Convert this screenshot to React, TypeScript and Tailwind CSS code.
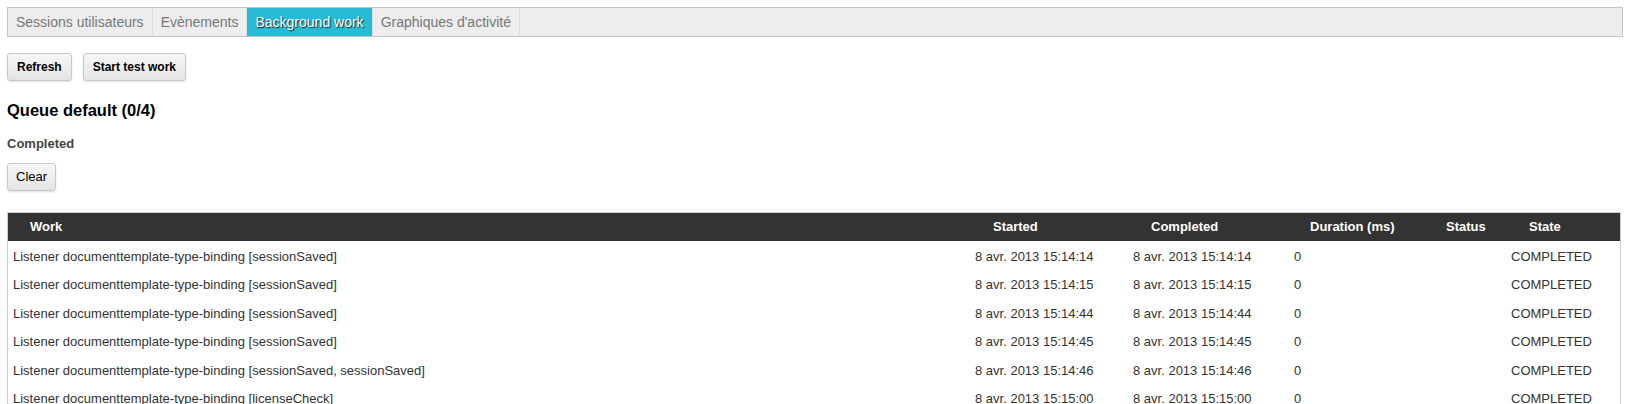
import React from 'react';

const tabs = ['Sessions utilisateurs', 'Evènements', 'Background work', "Graphiques d'activité"];

const rows = [
  { work: 'Listener documenttemplate-type-binding [sessionSaved]', time: '8 avr. 2013 15:14:14' },
  { work: 'Listener documenttemplate-type-binding [sessionSaved]', time: '8 avr. 2013 15:14:15' },
  { work: 'Listener documenttemplate-type-binding [sessionSaved]', time: '8 avr. 2013 15:14:44' },
  { work: 'Listener documenttemplate-type-binding [sessionSaved]', time: '8 avr. 2013 15:14:45' },
  { work: 'Listener documenttemplate-type-binding [sessionSaved, sessionSaved]', time: '8 avr. 2013 15:14:46' },
  { work: 'Listener documenttemplate-type-binding [licenseCheck]', time: '8 avr. 2013 15:15:00' },
];

function Button({ children, bold = true }: { children: React.ReactNode; bold?: boolean }) {
  return (
    <button
      className={
        'h-[28px] rounded-[3px] border border-[#c8c8c8] bg-gradient-to-b from-[#f6f6f6] to-[#e4e4e4] text-black shadow-[0_1px_2px_rgba(0,0,0,0.12)] ' +
        (bold ? 'px-[9px] text-[12px] font-bold' : 'px-2 text-[13px] font-normal')
      }
    >
      {children}
    </button>
  );
}

const cols = 'grid grid-cols-[955px_158px_161px_152px_65px_1fr] items-center';

export default function App() {
  return (
    <div className="min-h-screen bg-white px-[7px] pt-[7px] font-['Liberation_Sans',Arial,sans-serif] text-[#333]">
      <div className="flex h-[30px] w-[1616px] border border-[#c6c6c6] bg-[#ededee]">
        {tabs.map((t) => (
          <div
            key={t}
            className={
              t === 'Background work'
                ? 'flex items-center border-r border-[#dedede] bg-[#27bbd7] px-2 text-[14px] text-white [text-shadow:1px_1px_1px_#222]'
                : 'flex items-center border-r border-[#dedede] px-2 text-[14px] text-[#777]'
            }
          >
            {t}
          </div>
        ))}
      </div>

      <div className="mt-4 flex gap-[11px]">
        <Button>Refresh</Button>
        <Button>Start test work</Button>
      </div>

      <h2 className="mt-[19px] text-[16.5px] font-bold leading-5 text-black">Queue default (0/4)</h2>
      <h3 className="mt-[16px] text-[13px] font-bold leading-4 text-[#444]">Completed</h3>
      <div className="mt-[11px]">
        <Button bold={false}>Clear</Button>
      </div>

      <div className="mt-[21px] w-[1614px] border border-[#cfcfcf] text-[13px]">
        <div className={cols + ' h-[28px] bg-[#333] font-bold text-white'}>
          <div className="pl-[22px]">Work</div>
          <div className="pl-[30px]">Started</div>
          <div className="pl-[30px]">Completed</div>
          <div className="pl-[28px]">Duration (ms)</div>
          <div className="pl-[12px]">Status</div>
          <div className="pl-[30px]">State</div>
        </div>
        {rows.map((r, i) => (
          <div key={i} className={cols + ' h-[28.5px] pt-[2px] whitespace-nowrap'}>
            <div className="pl-[5px]">{r.work}</div>
            <div className="pl-3">{r.time}</div>
            <div className="pl-3">{r.time}</div>
            <div className="pl-3">0</div>
            <div />
            <div className="pl-3">COMPLETED</div>
          </div>
        ))}
      </div>
    </div>
  );
}
